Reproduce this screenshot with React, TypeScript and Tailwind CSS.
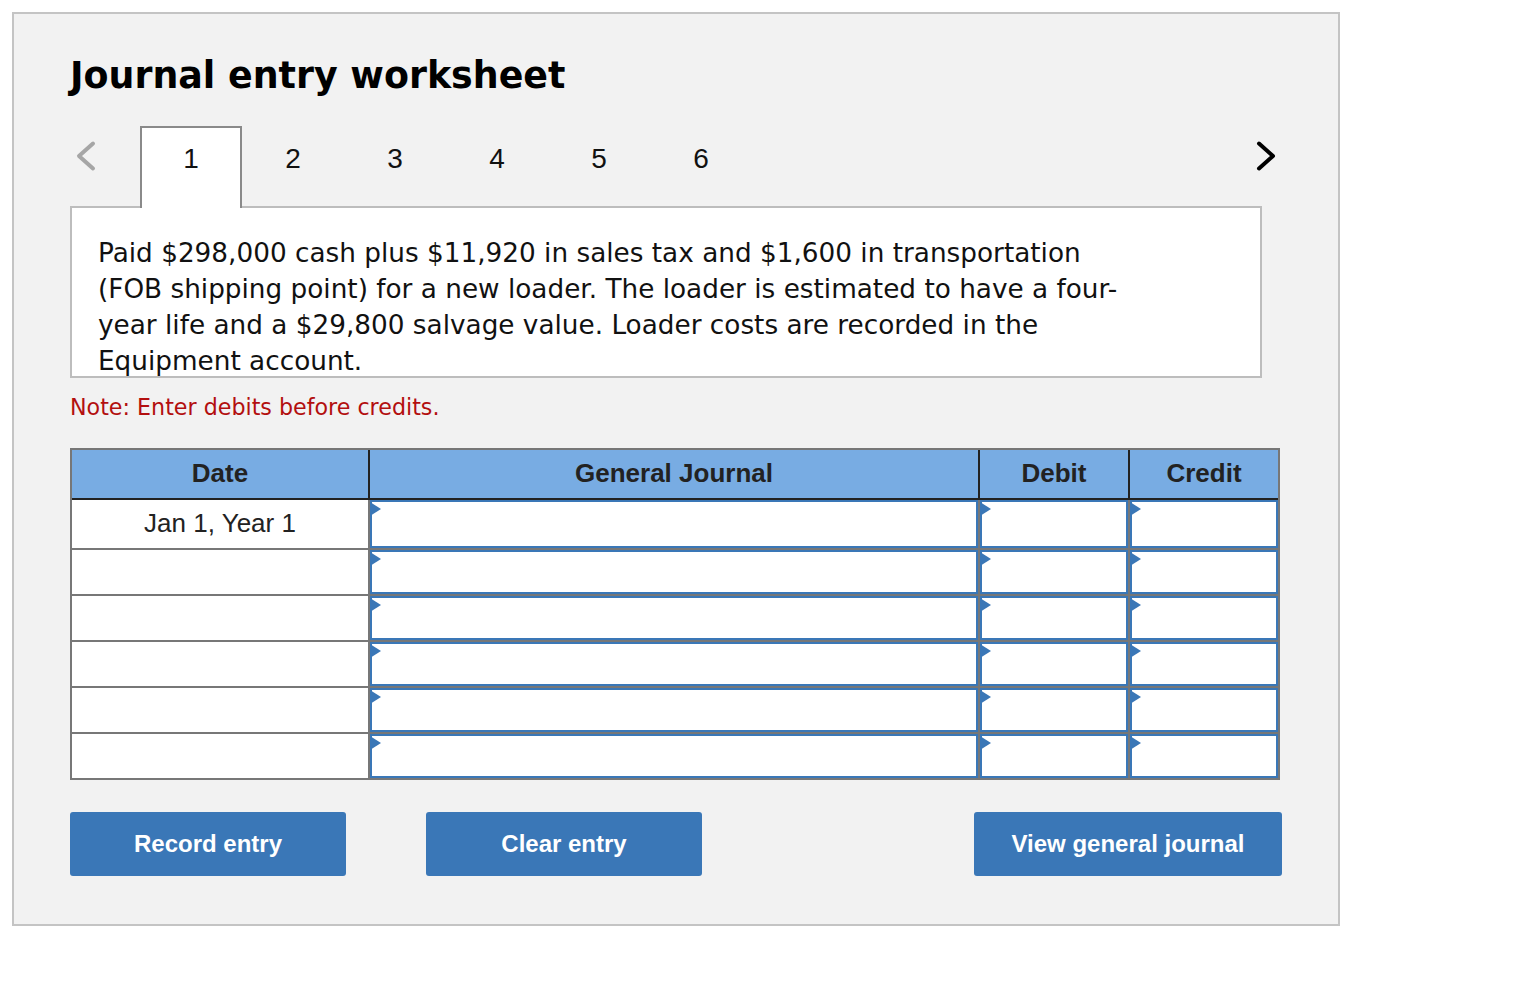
import React from 'react';

const tabs = ['1', '2', '3', '4', '5', '6'];
const rowHeights = ['h-[48px]', 'h-[44px]', 'h-[44px]', 'h-[44px]', 'h-[44px]', 'h-[44px]'];

const Triangle = () => (
  <svg className="absolute -left-[2px] top-0" width="11" height="14" viewBox="0 0 11 14">
    <path d="M0 0L11 7L0 14Z" fill="#3a77b7" />
  </svg>
);

const EntryCell = ({ width }: { width: string }) => (
  <div className={`${width} relative border-2 border-[#3a77b7] bg-white`}>
    <Triangle />
  </div>
);

const JournalRow = ({ height, date, last }: { height: string; date?: string; last: boolean }) => (
  <div className={`flex ${height} ${last ? '' : 'border-b-2 border-[#777777]'} box-content`}>
    <div className="w-[296px] flex items-center justify-center bg-white text-[26px] text-[#222222] pb-[2px]">
      {date}
    </div>
    <div className="w-[2px] bg-[#777777]" />
    <EntryCell width="w-[608px]" />
    <div className="w-[2px] bg-[#777777]" />
    <EntryCell width="w-[148px]" />
    <div className="w-[2px] bg-[#777777]" />
    <EntryCell width="w-[148px]" />
  </div>
);

const HeaderCell = ({ width, label }: { width: string; label: string }) => (
  <div className={`${width} flex items-center justify-center pb-[2px] font-bold text-[26px] text-[#222222]`}>{label}</div>
);

const ActionButton = ({ width, label }: { width: string; label: string }) => (
  <button className={`${width} h-[64px] rounded-[3px] bg-[#3a77b7] text-white font-bold text-[24px]`}>{label}</button>
);

export default function App() {
  return (
    <div className="min-h-[1002px] bg-white p-3 font-['Liberation_Sans',Arial,sans-serif]">
      <div className="w-[1328px] h-[914px] border-2 border-[#c4c4c4] bg-[#f2f2f2] pl-[56px] pt-[38px]">
        <h1 className="font-['DejaVu_Sans',Verdana,sans-serif] font-bold text-[36.4px] leading-[48px] text-black">
          Journal entry worksheet
        </h1>

        {/* Tabs */}
        <div className="relative z-10 mt-[26px] flex w-[1212px] h-[82px] -mb-[2px]">
          <div className="w-[70px] h-[62px] pl-[4px] flex items-center">
            <svg width="24" height="34" viewBox="0 0 24 34">
              <path d="M19 3.5L5 16L19 28.5" fill="none" stroke="#a6a6a6" strokeWidth="4" strokeLinecap="round" strokeLinejoin="round" />
            </svg>
          </div>
          {tabs.map((tab, i) => (
            <div
              key={tab}
              className={
                i === 0
                  ? 'w-[102px] h-[82px] border-2 border-b-0 border-[#8a8a8a] bg-white text-center text-[28px] leading-[62px] text-[#111111]'
                  : 'w-[102px] h-[82px] pt-[2px] text-center text-[28px] leading-[62px] text-[#111111]'
              }
            >
              {tab}
            </div>
          ))}
          <div className="ml-auto w-[26px] h-[62px] flex items-center">
            <svg width="24" height="34" viewBox="0 0 24 34">
              <path d="M3 3.5L17 16L3 28.5" fill="none" stroke="#000000" strokeWidth="4" strokeLinecap="round" strokeLinejoin="round" />
            </svg>
          </div>
        </div>

        {/* Question */}
        <div className="w-[1192px] h-[172px] border-2 border-[#bdbdbd] bg-white pl-[26px] pt-[27px] font-['DejaVu_Sans',Verdana,sans-serif] text-[26.3px] leading-[36px] text-[#111111]">
          <p className="w-[1035px]">
            Paid $298,000 cash plus $11,920 in sales tax and $1,600 in transportation (FOB shipping point) for a new
            loader. The loader is estimated to have a four-year life and a $29,800 salvage value. Loader costs are
            recorded in the Equipment account.
          </p>
        </div>

        <p className="mt-[14px] font-['DejaVu_Sans',Verdana,sans-serif] text-[22.2px] leading-[30px] text-[#b30f0f]">
          Note: Enter debits before credits.
        </p>

        {/* Journal table */}
        <div className="mt-[26px] w-[1210px] border-2 border-[#777777]">
          <div className="flex h-[48px] bg-[#78ace3] border-b-2 border-[#222222] box-content">
            <HeaderCell width="w-[296px]" label="Date" />
            <div className="w-[2px] bg-[#222222]" />
            <HeaderCell width="w-[608px]" label="General Journal" />
            <div className="w-[2px] bg-[#222222]" />
            <HeaderCell width="w-[148px]" label="Debit" />
            <div className="w-[2px] bg-[#222222]" />
            <HeaderCell width="w-[148px]" label="Credit" />
          </div>
          {rowHeights.map((height, i) => (
            <JournalRow key={i} height={height} date={i === 0 ? 'Jan 1, Year 1' : undefined} last={i === rowHeights.length - 1} />
          ))}
        </div>

        {/* Actions */}
        <div className="mt-[32px] flex w-[1212px]">
          <ActionButton width="w-[276px]" label="Record entry" />
          <div className="w-[80px]" />
          <ActionButton width="w-[276px]" label="Clear entry" />
          <div className="ml-auto" />
          <ActionButton width="w-[308px]" label="View general journal" />
        </div>
      </div>
    </div>
  );
}
